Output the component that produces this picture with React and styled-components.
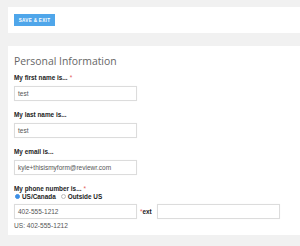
import styled, { createGlobalStyle } from 'styled-components';

const GlobalStyle = createGlobalStyle`
  html, body {
    margin: 0;
    padding: 0;
    overflow: hidden;
    background: #f1f1f1;
  }
`;

const Page = styled.div`
  padding: 7px 0 0 8px;
  font-family: "Liberation Sans", Arial, sans-serif;
`;

const Card = styled.section`
  background: #fff;
  padding: ${(p) => p.$pad};
  margin-bottom: ${(p) => p.$mb || '0'};
`;

const SaveButton = styled.button`
  display: block;
  width: 41px;
  height: 12px;
  padding: 0;
  border: none;
  background: #4fa6ea;
  color: #fff;
  font-family: "Liberation Sans", Arial, sans-serif;
  font-weight: bold;
  font-size: 4.6px;
  letter-spacing: 0.3px;
`;

const Title = styled.h2`
  margin: 0 0 5px;
  font-family: "Open Sans", sans-serif;
  font-weight: 400;
  font-size: 10.4px;
  line-height: 14px;
  color: #666;
`;

const Field = styled.div`
  margin-bottom: ${(p) => p.$mb || '9px'};
`;

const Label = styled.div`
  font-weight: bold;
  font-size: 6.4px;
  line-height: 9px;
  color: #222;
  margin-bottom: ${(p) => p.$mb || '4px'};
`;

const Req = styled.span`
  color: #e35a5a;
  font-weight: normal;
  margin-left: 2px;
`;

const Input = styled.div`
  box-sizing: border-box;
  width: 123px;
  height: 15px;
  border: 1px solid #dcdcdc;
  box-shadow: 0 0 1px rgba(0, 0, 0, 0.06);
  padding: 0 3px;
  font-size: 6.5px;
  line-height: 13px;
  color: #555;
  background: #fff;
`;

const RadioRow = styled.div`
  display: flex;
  align-items: center;
  height: 7px;
  margin-bottom: 4px;
  font-weight: bold;
  font-size: 6.4px;
  color: #222;
`;

const Radio = styled.span`
  box-sizing: border-box;
  width: 5px;
  height: 5px;
  border-radius: 50%;
  margin: 0 2px 0 ${(p) => p.$ml || '1px'};
  border: 1px solid ${(p) => (p.$checked ? '#3d8fe6' : '#bbb')};
  background: ${(p) => (p.$checked ? '#3d8fe6' : '#fff')};
`;

const PhoneRow = styled.div`
  display: flex;
  align-items: center;
  margin-bottom: 2px;
`;

const Ext = styled.span`
  margin: 0 5px 0 3px;
  font-weight: bold;
  font-size: 6.4px;
  color: #222;
`;

const ExtReq = styled.span`
  color: #e35a5a;
  font-weight: normal;
`;

const Note = styled.div`
  font-size: 6.6px;
  line-height: 9px;
  color: #555;
`;

export default function App() {
  return (
    <Page>
      <GlobalStyle />
      <Card $pad="7px 6px" $mb="13px">
        <SaveButton>SAVE &amp; EXIT</SaveButton>
      </Card>
      <Card $pad="8px 6px 5px">
        <Title>Personal Information</Title>
        <Field>
          <Label>
            My first name is...<Req>*</Req>
          </Label>
          <Input>test</Input>
        </Field>
        <Field>
          <Label>My last name is...</Label>
          <Input>test</Input>
        </Field>
        <Field>
          <Label>My email is...</Label>
          <Input>kyle+thisismyform@reviewr.com</Input>
        </Field>
        <Field $mb="0">
          <Label $mb="0">
            My phone number is...<Req>*</Req>
          </Label>
          <RadioRow>
            <Radio $checked />
            US/Canada
            <Radio $ml="5px" />
            Outside US
          </RadioRow>
          <PhoneRow>
            <Input>402-555-1212</Input>
            <Ext>
              <ExtReq>*</ExtReq>ext
            </Ext>
            <Input />
          </PhoneRow>
          <Note>US: 402-555-1212</Note>
        </Field>
      </Card>
    </Page>
  );
}
